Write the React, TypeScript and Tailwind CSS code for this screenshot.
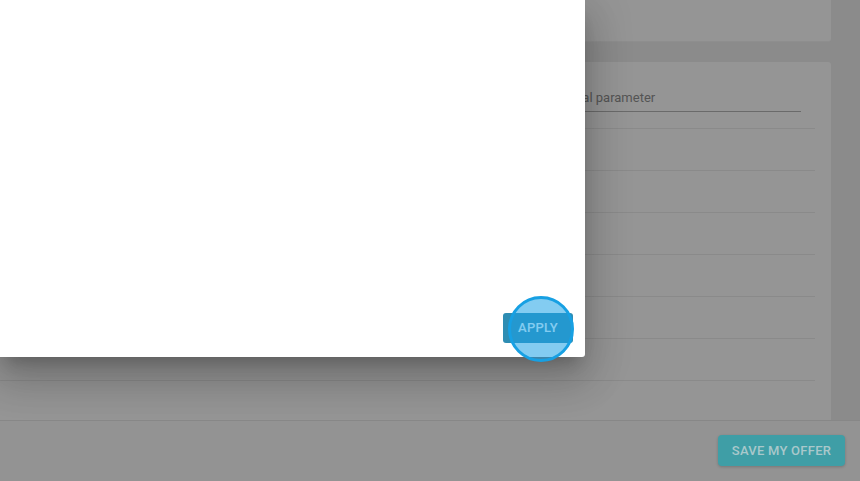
export default function App() {
  const rows = [0, 1, 2, 3, 4, 5]

  return (
    <div className="relative w-[860px] h-[481px] overflow-hidden bg-[#8b8b8b] font-['Roboto','Liberation_Sans',sans-serif]">
      <div className="flex flex-col h-full">
        {/* page behind the overlay */}
        <div className="flex-1 flex flex-col gap-5 min-h-0">
          <div className="w-[831px] h-[42px] shrink-0 bg-[#959595] rounded-b-[3px] border-b border-[#8e8e8e]" />
          <div className="w-[831px] flex-1 bg-[#959595] rounded-t-[3px] pt-[22px]">
            <div className="h-[28px] mr-[30px] border-b border-[#6a6a6a] flex items-end pb-[5px] pl-[534px]">
              <span className="text-[13px] leading-4 text-[#545454]">Additional parameter</span>
            </div>
            <div className="mt-4 mr-4 border-t border-[#8a8a8a]">
              {rows.map((r) => (
                <div key={r} className="h-[42px] border-b border-[#8a8a8a]" />
              ))}
            </div>
          </div>
        </div>

        <div className="h-[61px] shrink-0 bg-[#939393] border-t border-[#878787] flex justify-end items-start pt-[14px] pr-[15px]">
          <button className="w-[127px] h-[31px] rounded-[4px] bg-[#3f9ea6] text-[#a9c8cb] text-[13px] font-medium tracking-[0.02em] uppercase shadow-[0_1px_3px_rgba(0,0,0,0.2)]">
            Save my offer
          </button>
        </div>
      </div>

      {/* dialog */}
      <div className="absolute left-0 top-0 w-[585px] h-[357px] bg-white rounded-br-[3px] shadow-[0_11px_15px_-7px_rgba(0,0,0,0.2),0_24px_38px_3px_rgba(0,0,0,0.14),0_9px_46px_8px_rgba(0,0,0,0.12)] flex items-end justify-end pr-3 pb-[14px]">
        <button className="w-[70px] h-[30px] rounded-[3px] bg-[#2e8db3] text-white text-[13px] font-medium tracking-[0.02em]">
          APPLY
        </button>
      </div>

      {/* touch indicator */}
      <div className="absolute left-[508px] top-[296px] w-[66px] h-[66px] rounded-full border-[3px] border-[#17a0e3] bg-[rgba(30,162,230,0.55)]" />
    </div>
  )
}
